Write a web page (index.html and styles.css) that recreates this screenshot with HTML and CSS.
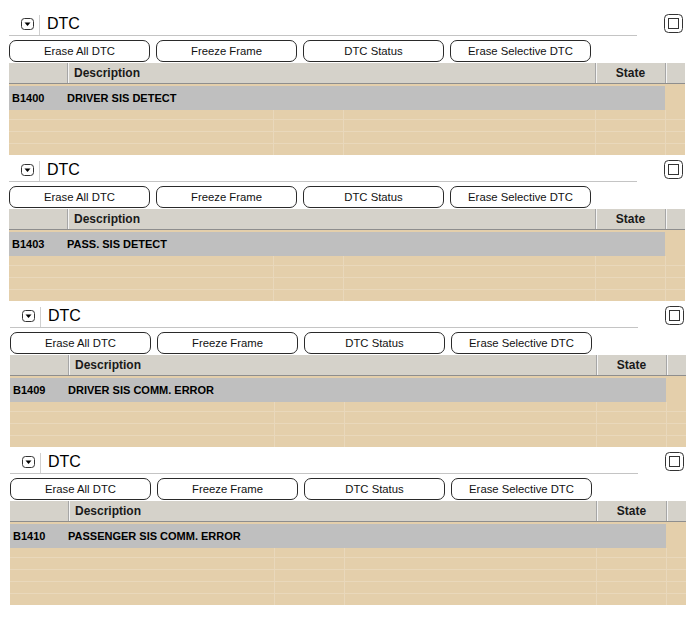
FILE: index.html
```html
<!DOCTYPE html>
<html lang="en">

<head>
    <meta charset="UTF-8">
    <title>DTC</title>
    <link rel="stylesheet" href="styles.css">
</head>

<body>
    <!-- DTC panel 1 -->
    <div class="panel">
        <div class="panel-head">
            <div class="head-left">
                <svg class="collapse-icon" width="13" height="12" viewBox="0 0 13 12">
                    <rect x="0.5" y="0.5" width="12" height="11" rx="3" fill="#fff" stroke="#333"/>
                    <polygon points="3.5,4.5 9.5,4.5 6.5,8" fill="#000"/>
                </svg>
                <span class="sep"></span>
                <span class="title">DTC</span>
            </div>
            <svg class="max-icon" width="19" height="19" viewBox="0 0 19 19">
                <rect x="0.5" y="0.5" width="18" height="18" rx="4" fill="#fff" stroke="#333"/>
                <rect x="4.5" y="4.5" width="10" height="10" fill="none" stroke="#333"/>
            </svg>
        </div>
        <div class="buttons">
            <button>Erase All DTC</button>
            <button>Freeze Frame</button>
            <button>DTC Status</button>
            <button>Erase Selective DTC</button>
        </div>
        <div class="table">
            <div class="thead">
                <div class="th col-code"></div>
                <div class="th col-desc">Description</div>
                <div class="th col-state">State</div>
                <div class="th col-fill"></div>
            </div>
            <div class="trow">
                <div class="td col-code">B1400</div>
                <div class="td col-desc">DRIVER SIS DETECT</div>
                <div class="td col-state"></div>
                <div class="td col-fill"></div>
            </div>
            <div class="empty">
                <div class="erow h10"><i class="c1"></i><i class="c2"></i><i class="c3"></i><i class="c4"></i><i></i></div>
                <div class="erow h12"><i class="c1"></i><i class="c2"></i><i class="c3"></i><i class="c4"></i><i></i></div>
                <div class="erow h12"><i class="c1"></i><i class="c2"></i><i class="c3"></i><i class="c4"></i><i></i></div>
                <div class="erow h11"><i class="c1"></i><i class="c2"></i><i class="c3"></i><i class="c4"></i><i></i></div>
            </div>
        </div>
    </div>

    <!-- DTC panel 2 -->
    <div class="panel">
        <div class="panel-head">
            <div class="head-left">
                <svg class="collapse-icon" width="13" height="12" viewBox="0 0 13 12">
                    <rect x="0.5" y="0.5" width="12" height="11" rx="3" fill="#fff" stroke="#333"/>
                    <polygon points="3.5,4.5 9.5,4.5 6.5,8" fill="#000"/>
                </svg>
                <span class="sep"></span>
                <span class="title">DTC</span>
            </div>
            <svg class="max-icon" width="19" height="19" viewBox="0 0 19 19">
                <rect x="0.5" y="0.5" width="18" height="18" rx="4" fill="#fff" stroke="#333"/>
                <rect x="4.5" y="4.5" width="10" height="10" fill="none" stroke="#333"/>
            </svg>
        </div>
        <div class="buttons">
            <button>Erase All DTC</button>
            <button>Freeze Frame</button>
            <button>DTC Status</button>
            <button>Erase Selective DTC</button>
        </div>
        <div class="table">
            <div class="thead">
                <div class="th col-code"></div>
                <div class="th col-desc">Description</div>
                <div class="th col-state">State</div>
                <div class="th col-fill"></div>
            </div>
            <div class="trow">
                <div class="td col-code">B1403</div>
                <div class="td col-desc">PASS. SIS DETECT</div>
                <div class="td col-state"></div>
                <div class="td col-fill"></div>
            </div>
            <div class="empty">
                <div class="erow h10"><i class="c1"></i><i class="c2"></i><i class="c3"></i><i class="c4"></i><i></i></div>
                <div class="erow h12"><i class="c1"></i><i class="c2"></i><i class="c3"></i><i class="c4"></i><i></i></div>
                <div class="erow h12"><i class="c1"></i><i class="c2"></i><i class="c3"></i><i class="c4"></i><i></i></div>
                <div class="erow h11"><i class="c1"></i><i class="c2"></i><i class="c3"></i><i class="c4"></i><i></i></div>
            </div>
        </div>
    </div>

    <!-- DTC panel 3 -->
    <div class="panel shift">
        <div class="panel-head">
            <div class="head-left">
                <svg class="collapse-icon" width="13" height="12" viewBox="0 0 13 12">
                    <rect x="0.5" y="0.5" width="12" height="11" rx="3" fill="#fff" stroke="#333"/>
                    <polygon points="3.5,4.5 9.5,4.5 6.5,8" fill="#000"/>
                </svg>
                <span class="sep"></span>
                <span class="title">DTC</span>
            </div>
            <svg class="max-icon" width="19" height="19" viewBox="0 0 19 19">
                <rect x="0.5" y="0.5" width="18" height="18" rx="4" fill="#fff" stroke="#333"/>
                <rect x="4.5" y="4.5" width="10" height="10" fill="none" stroke="#333"/>
            </svg>
        </div>
        <div class="buttons">
            <button>Erase All DTC</button>
            <button>Freeze Frame</button>
            <button>DTC Status</button>
            <button>Erase Selective DTC</button>
        </div>
        <div class="table">
            <div class="thead">
                <div class="th col-code"></div>
                <div class="th col-desc">Description</div>
                <div class="th col-state">State</div>
                <div class="th col-fill"></div>
            </div>
            <div class="trow">
                <div class="td col-code">B1409</div>
                <div class="td col-desc">DRIVER SIS COMM. ERROR</div>
                <div class="td col-state"></div>
                <div class="td col-fill"></div>
            </div>
            <div class="empty">
                <div class="erow h10"><i class="c1"></i><i class="c2"></i><i class="c3"></i><i class="c4"></i><i></i></div>
                <div class="erow h12"><i class="c1"></i><i class="c2"></i><i class="c3"></i><i class="c4"></i><i></i></div>
                <div class="erow h12"><i class="c1"></i><i class="c2"></i><i class="c3"></i><i class="c4"></i><i></i></div>
                <div class="erow h11"><i class="c1"></i><i class="c2"></i><i class="c3"></i><i class="c4"></i><i></i></div>
            </div>
        </div>
    </div>

    <!-- DTC panel 4 -->
    <div class="panel shift">
        <div class="panel-head">
            <div class="head-left">
                <svg class="collapse-icon" width="13" height="12" viewBox="0 0 13 12">
                    <rect x="0.5" y="0.5" width="12" height="11" rx="3" fill="#fff" stroke="#333"/>
                    <polygon points="3.5,4.5 9.5,4.5 6.5,8" fill="#000"/>
                </svg>
                <span class="sep"></span>
                <span class="title">DTC</span>
            </div>
            <svg class="max-icon" width="19" height="19" viewBox="0 0 19 19">
                <rect x="0.5" y="0.5" width="18" height="18" rx="4" fill="#fff" stroke="#333"/>
                <rect x="4.5" y="4.5" width="10" height="10" fill="none" stroke="#333"/>
            </svg>
        </div>
        <div class="buttons">
            <button>Erase All DTC</button>
            <button>Freeze Frame</button>
            <button>DTC Status</button>
            <button>Erase Selective DTC</button>
        </div>
        <div class="table">
            <div class="thead">
                <div class="th col-code"></div>
                <div class="th col-desc">Description</div>
                <div class="th col-state">State</div>
                <div class="th col-fill"></div>
            </div>
            <div class="trow">
                <div class="td col-code">B1410</div>
                <div class="td col-desc">PASSENGER SIS COMM. ERROR</div>
                <div class="td col-state"></div>
                <div class="td col-fill"></div>
            </div>
            <div class="empty">
                <div class="erow h10"><i class="c1"></i><i class="c2"></i><i class="c3"></i><i class="c4"></i><i></i></div>
                <div class="erow h12"><i class="c1"></i><i class="c2"></i><i class="c3"></i><i class="c4"></i><i></i></div>
                <div class="erow h12"><i class="c1"></i><i class="c2"></i><i class="c3"></i><i class="c4"></i><i></i></div>
                <div class="erow h12"><i class="c1"></i><i class="c2"></i><i class="c3"></i><i class="c4"></i><i></i></div>
                <div class="erow h12"><i class="c1"></i><i class="c2"></i><i class="c3"></i><i class="c4"></i><i></i></div>
            </div>
        </div>
    </div>
</body>

</html>
```

FILE: styles.css
```css
body {
    margin: 0;
    padding: 10px 0 0 9px;
    font-family: "Liberation Sans", Arial, sans-serif;
    background-color: #fff;
    color: #000;
}

.panel {
    width: 676px;
    margin-bottom: 1px;
}

.panel.shift {
    margin-left: 1px;
}

/* header line with the collapse arrow and title */
.panel-head {
    display: flex;
    align-items: flex-start;
}

.head-left {
    width: 628px;
    height: 25px;
    display: flex;
    align-items: center;
    border-bottom: 1px solid #c4c4c4;
}

.collapse-icon {
    margin-left: 12px;
    margin-top: 2px;
}

.sep {
    width: 1px;
    height: 20px;
    margin: 5px 0 0 5px;
    align-self: flex-start;
    background-color: #d0d0d0;
}

.title {
    margin: 2px 0 0 7px;
    font-size: 16px;
}

.max-icon {
    margin: 4px 2px 0 auto;
}

/* action buttons */
.buttons {
    display: flex;
    gap: 6px;
    margin-top: 4px;
}

.buttons button {
    width: 141px;
    height: 22px;
    padding: 0;
    border: 1px solid #2a2a2a;
    border-radius: 7px;
    background-color: #fff;
    font-family: "Liberation Sans", Arial, sans-serif;
    font-size: 11.3px;
    color: #111;
}

/* table */
.table {
    margin-top: 1px;
    background-color: #e4cfab;
}

.thead {
    display: flex;
    height: 20px;
    background-color: #d5d2ca;
    border-bottom: 1px solid #8e8e8e;
}

.th {
    font-size: 12px;
    font-weight: bold;
    line-height: 20px;
    color: #1a1a1a;
}

.thead .col-desc,
.thead .col-state,
.thead .col-fill {
    border-left: 1px solid #a6a6a6;
    box-shadow: inset 1px 0 #f4f4f4;
}

.col-code {
    width: 58px;
}

.col-desc {
    flex: 1;
}

.col-state {
    width: 69px;
    text-align: center;
}

.col-fill {
    width: 19px;
}

.thead .col-desc {
    padding-left: 6px;
}

.trow {
    display: flex;
    height: 24px;
    margin-top: 2px;
}

.td {
    font-size: 11px;
    font-weight: bold;
    line-height: 24px;
    background-color: #bfbfbf;
}

.trow .col-code {
    width: 55px;
    padding-left: 3px;
}

.trow .col-state {
    width: 70px;
}

.trow .col-fill {
    width: 20px;
    background-color: #e4cfab;
}

/* empty tan rows */
.erow {
    display: flex;
    border-bottom: 1px solid #e9d8bb;
}

.erow:last-child {
    border-bottom: 0;
}

.erow i {
    flex: 1;
}

.erow .c1 {
    flex: 0 0 264px;
    border-right: 1px solid #e9d8bb;
}

.erow .c2 {
    flex: 0 0 69px;
    border-right: 1px solid #e9d8bb;
}

.erow .c3 {
    flex: 0 0 251px;
    border-right: 1px solid #e9d8bb;
}

.erow .c4 {
    flex: 0 0 69px;
    border-right: 1px solid #e9d8bb;
}

.h10 {
    height: 9px;
}

.h11 {
    height: 11px;
}

.h12 {
    height: 11px;
}
```
